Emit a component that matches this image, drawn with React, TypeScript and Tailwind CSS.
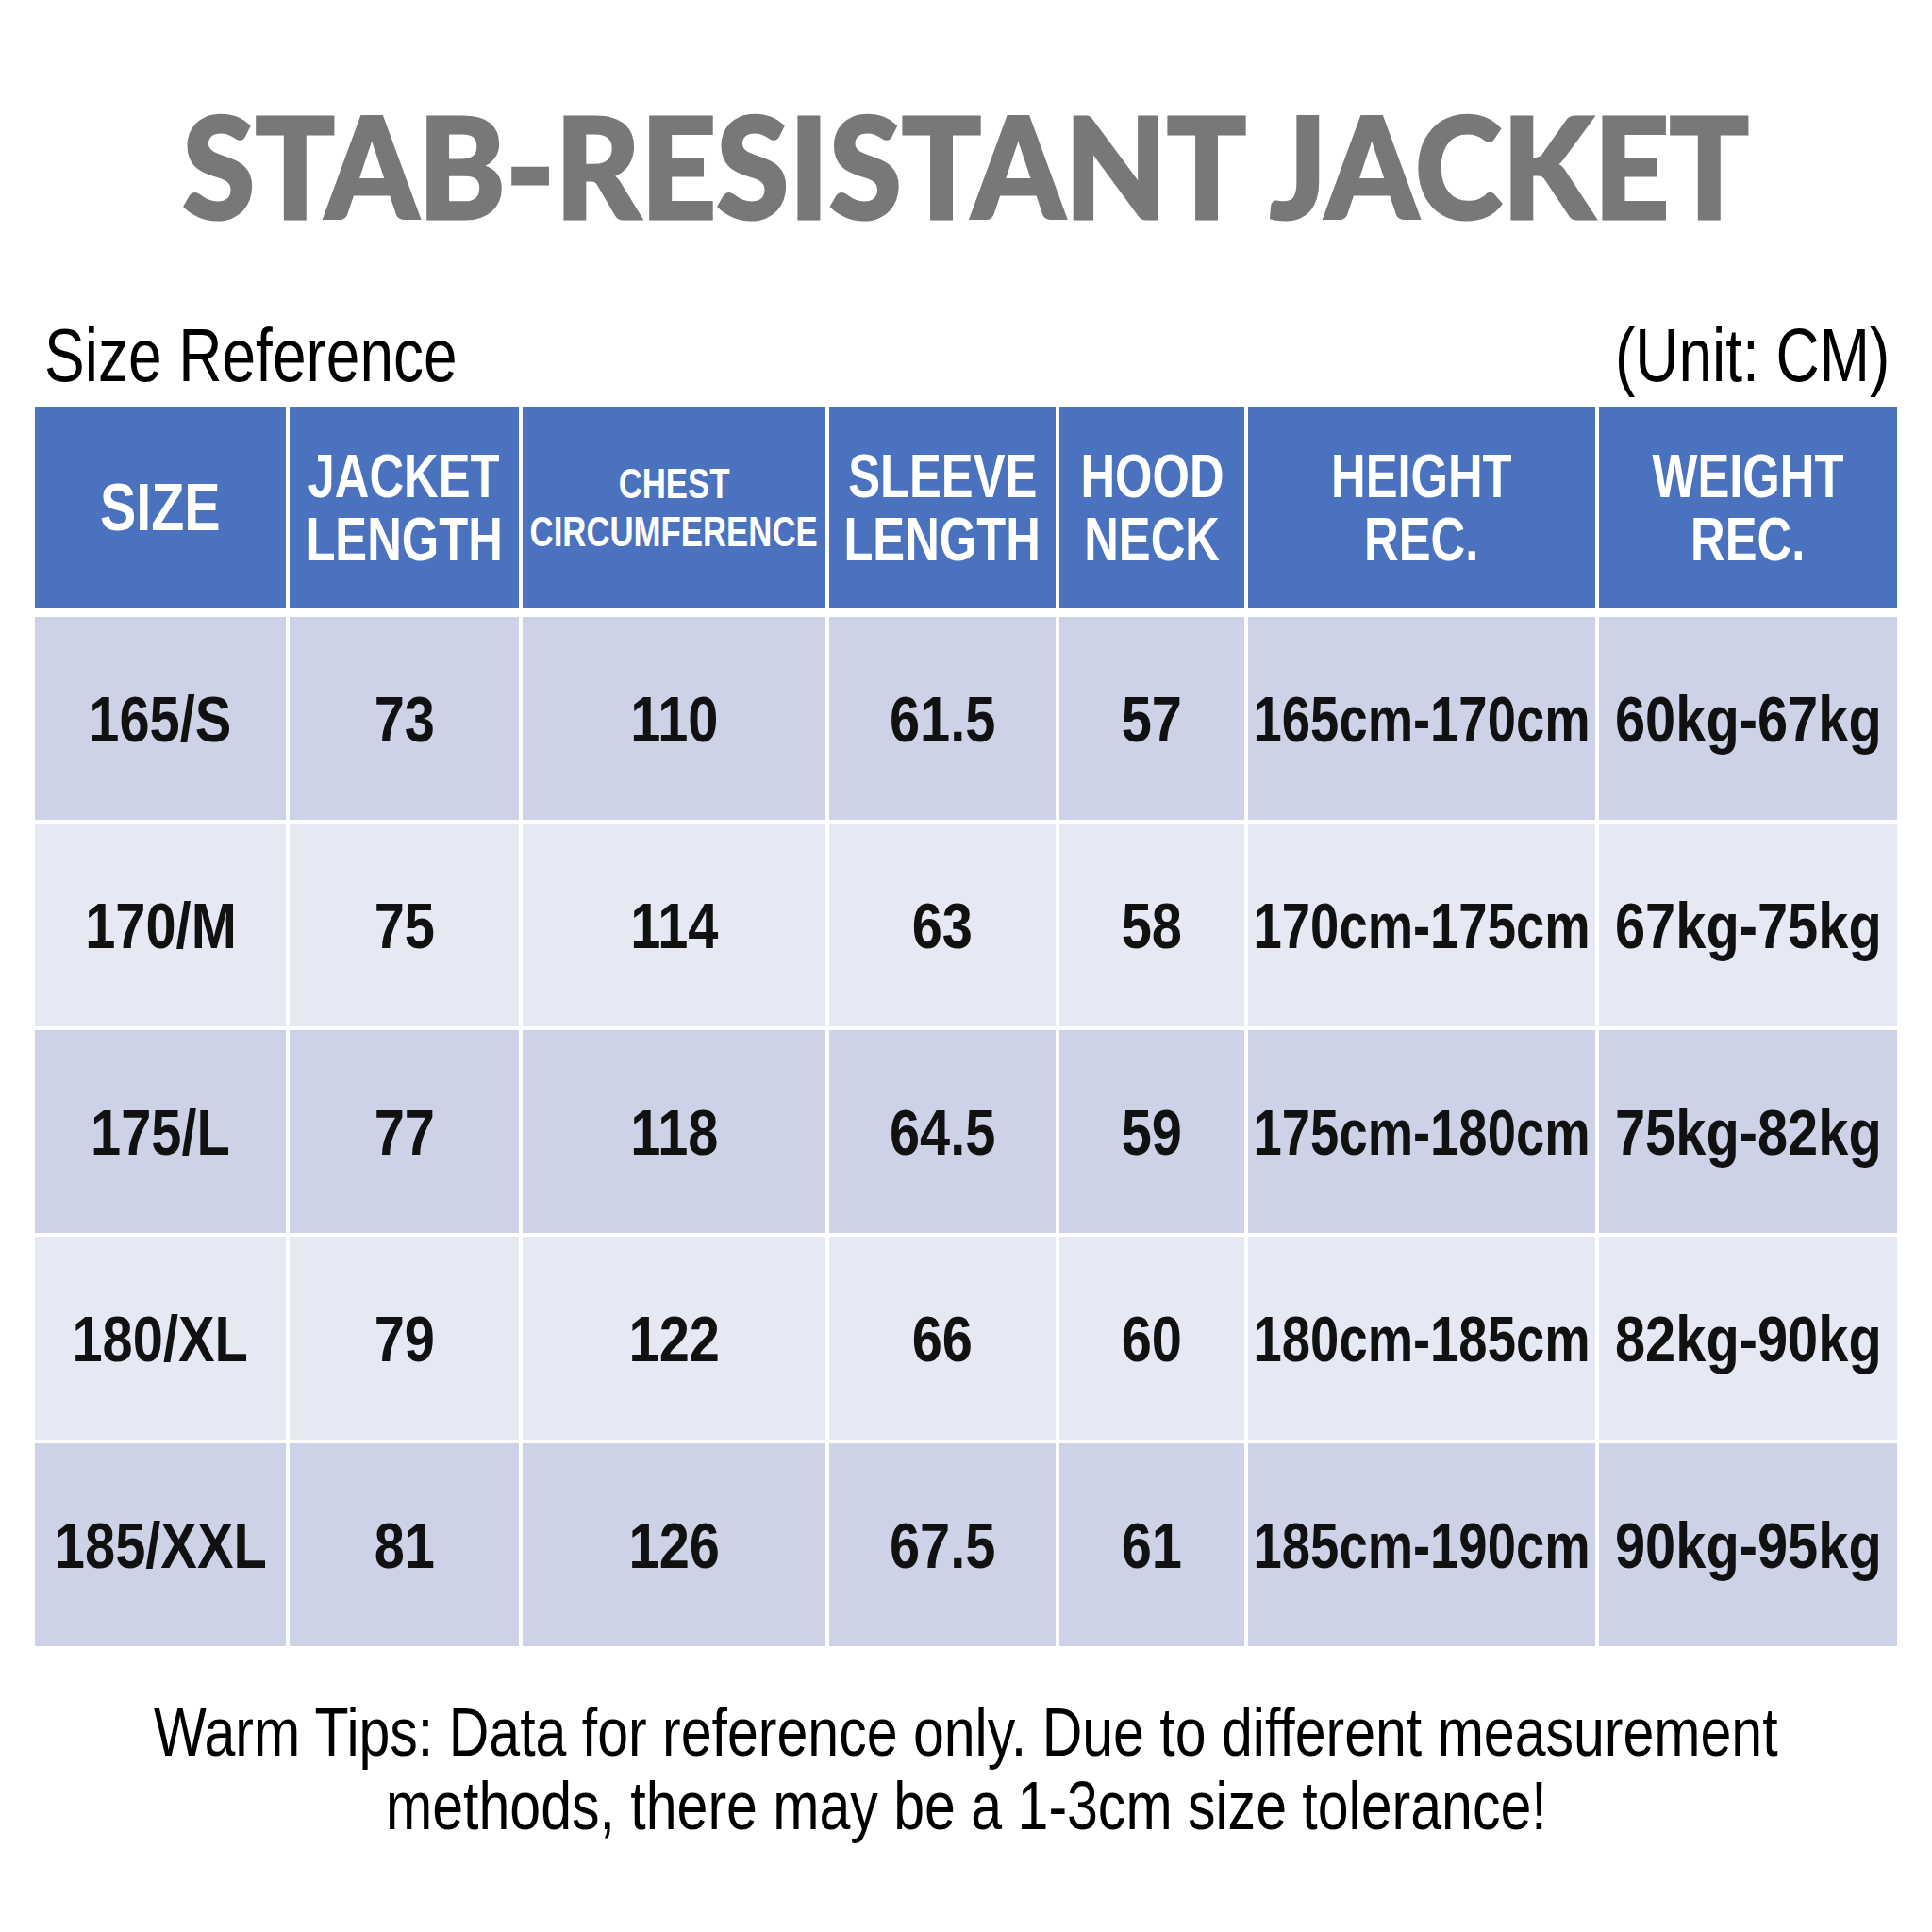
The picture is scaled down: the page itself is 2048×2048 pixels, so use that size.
import React from 'react';

const rows = [
  ['165/S', '73', '110', '61.5', '57', '165cm-170cm', '60kg-67kg'],
  ['170/M', '75', '114', '63', '58', '170cm-175cm', '67kg-75kg'],
  ['175/L', '77', '118', '64.5', '59', '175cm-180cm', '75kg-82kg'],
  ['180/XL', '79', '122', '66', '60', '180cm-185cm', '82kg-90kg'],
  ['185/XXL', '81', '126', '67.5', '61', '185cm-190cm', '90kg-95kg'],
];

const cols = 'grid grid-cols-[266px_243px_321px_240px_196px_368px_316px] gap-x-[4px]';
// Arial-metric sans, squeezed sideways to look like the narrow face in the picture
const sans = "font-['Liberation_Sans',Arial,sans-serif]";

function HeadCell({ lines, kind }: { lines: string[]; kind?: 'size' | 'small' }) {
  const text =
    kind === 'small'
      ? 'text-[44px] leading-[51px] scale-x-[0.79]'
      : kind === 'size'
        ? 'text-[70px] leading-[70px] scale-x-[0.82]'
        : 'text-[65px] leading-[67px] scale-x-[0.78]';
  return (
    <div className="flex flex-col items-center justify-center bg-[#4a72bf] text-white">
      {lines.map((l) => (
        <div key={l} className={`${sans} font-bold whitespace-nowrap ${text}`}>
          {l}
        </div>
      ))}
    </div>
  );
}

export default function App() {
  return (
    <div className="w-[2048px] h-[2048px] overflow-hidden bg-white px-[37px] pt-[101px]">
      <h1 className="text-center font-['Lato','Open_Sans',sans-serif] font-black text-[148px] leading-none text-[#787878] [-webkit-text-stroke:3px_#787878] whitespace-nowrap">
        <span className="inline-block scale-x-[0.945]">STAB-RESISTANT JACKET</span>
      </h1>

      <div className={`mt-[88px] flex justify-between pl-[10px] pr-[8px] ${sans} text-[80px] leading-none text-black`}>
        <span className="inline-block origin-left scale-x-[0.8] whitespace-nowrap">Size Reference</span>
        <span className="inline-block origin-right scale-x-[0.8] whitespace-nowrap">(Unit: CM)</span>
      </div>

      <div className="mt-[14px]">
        <div className={`${cols} h-[213px]`}>
          <HeadCell lines={['SIZE']} kind="size" />
          <HeadCell lines={['JACKET', 'LENGTH']} />
          <HeadCell lines={['CHEST', 'CIRCUMFERENCE']} kind="small" />
          <HeadCell lines={['SLEEVE', 'LENGTH']} />
          <HeadCell lines={['HOOD', 'NECK']} />
          <HeadCell lines={['HEIGHT', 'REC.']} />
          <HeadCell lines={['WEIGHT', 'REC.']} />
        </div>

        <div className="mt-[10px] flex flex-col gap-y-[4px]">
          {rows.map((r, i) => (
            <div key={r[0]} className={`${cols} h-[215px]`}>
              {r.map((c, j) => (
                <div
                  key={j}
                  className={`flex items-center justify-center ${
                    i % 2 === 0 ? 'bg-[#cdd2e7]' : 'bg-[#e6e8f3]'
                  }`}
                >
                  <span
                    className={`inline-block ${sans} font-bold text-[68px] leading-none text-[#111] whitespace-nowrap ${
                      j === 5 ? 'scale-x-[0.8]' : 'scale-x-[0.85]'
                    }`}
                  >
                    {c}
                  </span>
                </div>
              ))}
            </div>
          ))}
        </div>
      </div>

      <div className={`-mx-[37px] mt-[52px] flex flex-col items-center ${sans} text-[72px] leading-[78px] text-black whitespace-nowrap`}>
        <span className="inline-block scale-x-[0.82]">
          Warm Tips: Data for reference only. Due to different measurement
        </span>
        <span className="inline-block scale-x-[0.82]">methods, there may be a 1-3cm size tolerance!</span>
      </div>
    </div>
  );
}
